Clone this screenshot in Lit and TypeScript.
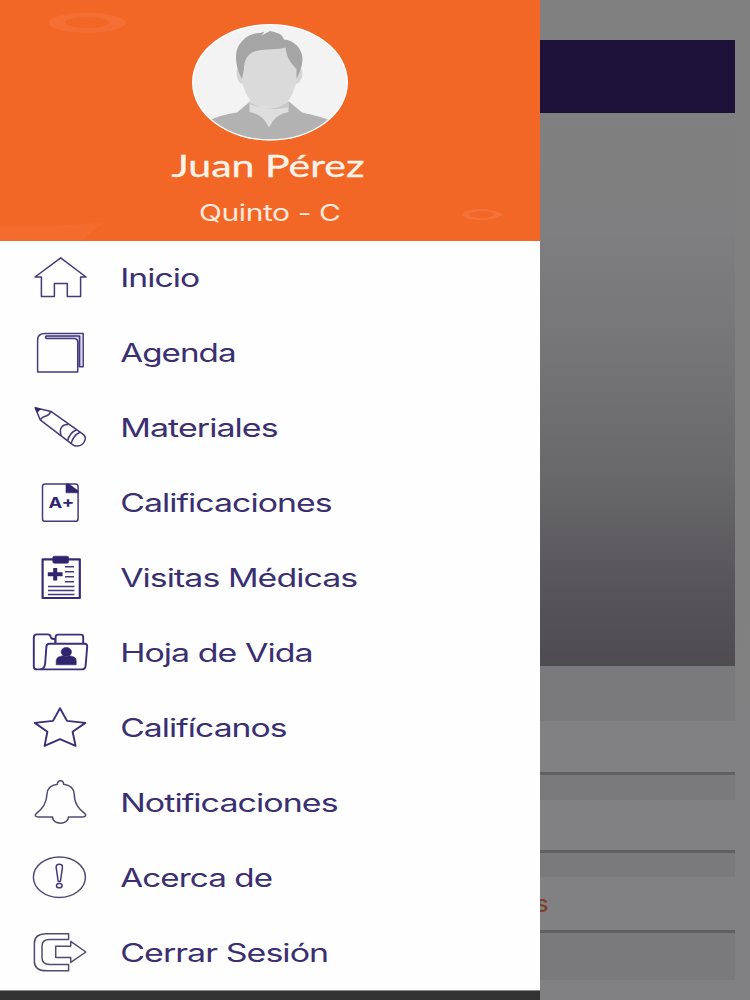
import { LitElement, html, svg, css } from "lit";
import { customElement } from "lit/decorators.js";

const ICONS: Record<string, unknown> = {
  home: svg`<path d="M60.7 17.8 86 37H80.6V56.6H67.3V43.4H54.4V56.6H41.4V37H35Z"/>`,
  book: svg`<path class="tint" d="M45 20.6H81.5V51.6H79.2V22.5H46Z"/>
    <path d="M37.6 57V25Q37.6 18.4 45 18.4H83.2V51.8H79.4V21H46.5Q44.4 22.2 46.5 23.6H74Q77.7 23.6 77.7 27V57Z"/>`,
  pencil: svg`<path d="M35.2 17.8 51 21.4 83.6 44.6C87.4 48.2 84 55.6 77.5 56Q74.6 56.2 72.6 54.6L40.2 29.8Z"/>
    <path d="M51 21.4Q48.8 25.4 46 26 42 26.8 40.2 29.8M68.4 34.6C62.5 34.2 58.6 38 61.2 45.7M76.6 39.7Q69.5 42.6 67.6 50.7M80 42.2Q73 45.5 71.2 53.4"/>
    <path class="solid" d="M35.2 17.8 40.6 19 37.2 22.4Z"/>`,
  grade: svg`<rect x="42.5" y="19.1" width="35.6" height="37.2" rx="2.6"/>
    <path class="solid" d="M66 19H69L78 25.8V27.8H66Z"/>
    <text class="mark" x="48.6" y="43" textLength="25.6" lengthAdjust="spacingAndGlyphs">A+</text>`,
  clipboard: svg`<rect class="w2" x="42.6" y="19.4" width="37.2" height="38.6"/>
    <rect class="solid" x="52.8" y="16.2" width="15.8" height="7" rx="1.4"/>
    <path class="w3" d="M55.2 28V40.4M47.8 34.2H62.6"/>
    <path d="M65 26.7H74M65 31.7H74M65 36.7H74M65 41.7H74M48 46.4H74.4M48 50.4H74.4M48 54.4H74.4"/>`,
  folder: svg`<path class="w15" d="M40 54.4H37Q33.8 54.4 33.8 51.4V22.4Q33.8 19.4 37 19.4H47.6Q50.4 19.4 50.8 22Q51.2 24.2 55.2 24.2V29M55.6 29V22Q55.6 19.6 58.4 19.6H80.6Q83.2 19.6 83.2 22V29M40 54.4Q44.8 54 45.2 48L46.4 31.6Q46.6 28.8 49.6 28.8H84.6Q87.4 28.8 87.2 31.6L85.6 50.8Q85.2 54.4 81.6 54.4H40"/>
    <ellipse class="solid" cx="66.3" cy="36.8" rx="5.2" ry="4.4"/>
    <path class="solid" d="M56.2 49.8V46Q56.2 42.2 60.4 41.4L63.4 40.4Q66.4 42.6 69.2 40.4L72 41.4Q76.2 42.2 76.2 46V49.8Z"/>`,
  star: svg`<path class="w15" d="M60 18.2 67 30.9 85.4 32.9 72.6 41.7 75.6 55.9 60 49.1 44.6 55.9 47.4 41.7 34.8 32.9 53 30.9Z"/>`,
  bell: svg`<path class="gray" d="M57.4 19.2C57 14.6 64 14.6 63.6 19.2 70.4 20.2 74 24 74.2 29 74.3 38.6 78.6 43.6 84.8 48.6 86.6 50.2 85.6 52 82.8 52H68.4C68.6 60.4 52.2 60.4 52.6 52H38.4C35.2 52 34.4 50.2 36.2 48.6 42.4 43.6 46.6 38.6 47 29 47.2 24 50.8 20.2 57.4 19.2Z"/>`,
  info: svg`<ellipse class="gray" cx="59.4" cy="37.2" rx="26" ry="20.2"/>
    <path d="M59.3 24.3Q62.8 24.3 62.4 27.6L60.4 41.5H58.2L56.2 27.6Q55.8 24.3 59.3 24.3Z"/>
    <ellipse cx="59.3" cy="45.7" rx="2.8" ry="2.1"/>`,
  exit: svg`<path class="gray" d="M68.6 18.7V24.4H49.6Q42 24.4 42 31V43Q42 49.4 49.6 49.4H68.6V55.7H46.5Q34.4 55.7 34.4 46.4V28Q34.4 18.7 46.5 18.7Z"/>
    <path class="gray" d="M55.7 31.3H70.7V26.4L85.9 37 70.7 47.4V42.6H55.7Z"/>`,
};

const ITEMS: [string, string, number][] = [
  ["home", "Inicio", 79],
  ["book", "Agenda", 115.5],
  ["pencil", "Materiales", 157.5],
  ["grade", "Calificaciones", 211.5],
  ["clipboard", "Visitas Médicas", 237],
  ["folder", "Hoja de Vida", 192.5],
  ["star", "Califícanos", 166.5],
  ["bell", "Notificaciones", 217.5],
  ["info", "Acerca de", 152],
  ["exit", "Cerrar Sesión", 208],
];

@customElement("menu-item")
class MenuItem extends LitElement {
  static properties = { icon: {}, label: {}, span: { type: Number } };
  declare icon: string;
  declare label: string;
  declare span: number;

  static styles = css`
    :host { display: flex; height: 75px; }
    svg { display: block; flex: none; overflow: visible; }
    .icon { fill: none; stroke: #443a7c; stroke-width: 1.5; stroke-linejoin: round; }
    .gray { stroke: #504b72; }
    .w15 { stroke-width: 1.9; stroke: #3a2f78; }
    .w2 { stroke-width: 2.2; stroke: #372b76; }
    .w3 { stroke-width: 4; stroke: #30246f; }
    .solid { fill: #30246f; stroke: #30246f; stroke-width: 0.6; }
    .tint { fill: #b9b2dc; stroke: none; }
    .mark { fill: #30246f; stroke: none; font: 700 15px Inter, sans-serif; }
    .label { fill: #3a2f70; font: 400 25px Inter, sans-serif; letter-spacing: -0.7px; }
  `;

  render() {
    return html`
      <svg class="icon" width="120" height="75" viewBox="0 0 120 75">${ICONS[this.icon]}</svg>
      <svg width="260" height="75">
        <text class="label" x="0.2" y="46.6" textLength=${this.span} lengthAdjust="spacingAndGlyphs">${this.label}</text>
      </svg>
    `;
  }
}

@customElement("app-root")
class AppRoot extends LitElement {
  static styles = css`
    :host { display: flex; width: 750px; height: 1000px; overflow: hidden; background: #808080; }
    .drawer { display: flex; flex-direction: column; width: 540px; height: 1000px; background: #fefefe; z-index: 1; }
    header { height: 241px; margin-bottom: -1px; background: #f26626; }
    header svg { display: block; }
    .name { fill: #fff4ea; font: 400 31px Lato, sans-serif; stroke: #fff4ea; stroke-width: 0.3; }
    .grade { fill: #ffe9dc; font: 400 22.5px Inter, sans-serif; letter-spacing: -0.3px; }
    nav { height: 749px; flex: none; }
    .bar { height: 10px; flex: none; margin-top: auto; background: #333233; border-top: 1px solid #8a8a8a; box-sizing: border-box; }
    .page { display: flex; flex-direction: column; width: 195px; padding-top: 40px; box-sizing: border-box; }
    .title { height: 72.5px; background: #1d1039; }
    .gap { height: 125.5px; background: linear-gradient(#808080, #7f7e80); }
    .photo { height: 428px; background: linear-gradient(#7e7d7f, #777678 22%, #69686b 55%, #575559 82%, #4e4c50); }
    .space { background: #7a797b; }
    .card { display: flex; align-items: center; background: #818082; border-bottom: 3px solid #605f61; box-sizing: border-box; }
    .s1 { height: 55px; } .c1 { height: 54px; }
    .s2 { height: 25px; } .c2 { height: 53px; }
    .s3 { height: 24px; } .c3 { height: 56px; }
    .s4 { height: 47px; }
    .end { flex: 1; background: #818082; }
    .text { margin: 1px 0 0 -4px; color: #803d28; font: 500 23px Inter, sans-serif; }
    .edge { flex: 1; background: linear-gradient(#808080, #818082); }
  `;

  render() {
    return html`
      <div class="drawer">
        <header>
          <svg width="540" height="241" viewBox="0 0 540 241">
            <defs>
              <clipPath id="face"><ellipse cx="270" cy="82.3" rx="76.6" ry="57" /></clipPath>
            </defs>
            <path fill-rule="evenodd" d="M48.5 22.8a38.5 10 0 1 0 77 0a38.5 10 0 1 0-77 0ZM65 22.5a22 5.6 0 1 0 44 0a22 5.6 0 1 0-44 0Z" fill="#f56f35" />
            <path fill-rule="evenodd" d="M462 214.5Q465 209 482 209 494 209 503 214.5 494 220 482 220 465 220 462 214.5ZM469 214.5a12.5 3.4 0 1 0 25 0a12.5 3.4 0 1 0-25 0Z" fill="#f6723b" />
            <path d="M0 226Q60 227 108 222 92 229 82 241H0Z" fill="#f46d31" opacity=".7" />
            <ellipse cx="270" cy="82.3" rx="78" ry="58.4" fill="#fff" />
            <g clip-path="url(#face)">
              <rect x="190" y="20" width="160" height="125" fill="#f3f3f4" />
              <path d="M205 122Q222 114 237 112.5L250 101.5H289L302 112.5Q320 116 334 122V145H205Z" fill="#b2b2b3" />
              <path d="M249.5 101V112Q263 114 269 127.5Q275 114 288.5 112V101Z" fill="#dedede" />
              <path d="M249 101Q269 116 289 101L288 107.5Q270 112 249.5 104Z" fill="#c9c9ca" />
              <path d="M241 67Q235 68 237 77 239 85 243.5 83.5ZM298 67Q304 68 302 77 299 85 295 83.5Z" fill="#d4d4d5" />
              <path d="M241 62Q242 48 261 46H288Q297 51 297 65V78Q294 96 286 103 270 110 252 103 243 92 241 76Z" fill="#dadadb" />
              <path d="M242 79C237 71 234 57 237.5 48.5 241 39 251 32.5 260 33L264.5 31.5 261.5 35.5 270 31C276 32.5 282 33 284 39.5 294 40 303 49 302.5 60 302 68 299 73 296.5 79V69C291 63 287 59 285.5 47.5 279 50 266 48.5 256 51 246 54 244 62 244 69Z" fill="#a5a5a6" />
            </g>
            <text class="name" x="171.5" y="176.8" textLength="193" lengthAdjust="spacingAndGlyphs">Juan Pérez</text>
            <text class="grade" x="199" y="220.6" textLength="141.5" lengthAdjust="spacingAndGlyphs">Quinto - C</text>
          </svg>
        </header>
        <nav>
          ${ITEMS.map(([icon, label, span]) => html`<menu-item .icon=${icon} .label=${label} .span=${span}></menu-item>`)}
        </nav>
        <div class="bar"></div>
      </div>
      <div class="page">
        <div class="title"></div>
        <div class="gap"></div>
        <div class="photo"></div>
        <div class="space s1"></div>
        <div class="card c1"></div>
        <div class="space s2"></div>
        <div class="card c2"></div>
        <div class="space s3"></div>
        <div class="card c3"><span class="text">s</span></div>
        <div class="space s4"></div>
        <div class="end"></div>
      </div>
      <div class="edge"></div>
    `;
  }
}
